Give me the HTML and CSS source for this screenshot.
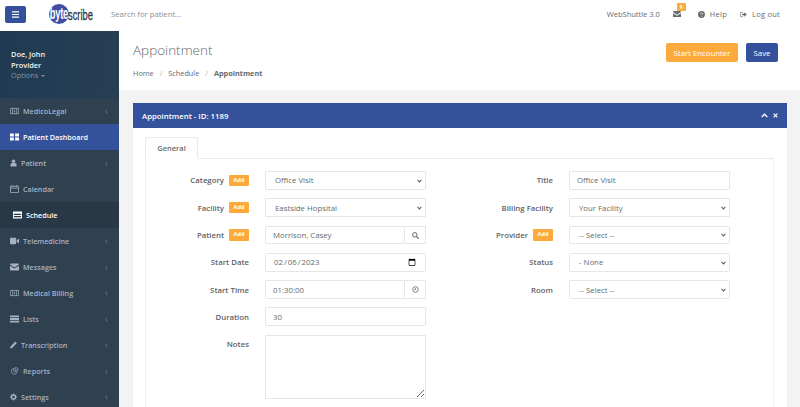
FILE: index.html
```html
<!DOCTYPE html>
<html lang="en">
<head>
<meta charset="utf-8">
<title>Appointment</title>
<link rel="stylesheet" href="styles.css">
</head>
<body>
<header class="topbar">
  <button class="menu-btn" type="button"><svg viewBox="0 0 10 8" class="i9"><path d="M1 1h8M1 4h8M1 7h8" stroke="#fff" stroke-width="1.4"/></svg></button>
  <div class="logo"><span class="logo-ball"><span class="logo-byte">byte</span></span><span class="logo-scribe">scribe</span></div>
  <div class="search">Search for patient...</div>
  <nav class="topnav">
    <span>WebShuttle 3.0</span>
    <span class="mail"><svg viewBox="0 0 10 8" class="i7m"><path d="M0 1.200C0 .5.500 0 1 0h8c.6 0 1 .5 1 1.200L5 4.500zM0 2.600V7c0 .6.400 1 1 1h8c.6 0 1-.4 1-1V2.600L5 5.800z" fill="#676a6c"/></svg><b class="count">8</b></span>
    <span class="navlink"><svg viewBox="0 0 10 10" class="i7"><circle cx="5" cy="5" r="4.900" fill="#676a6c"/><path d="M3.400 3.900C3.500 2.900 4.200 2.400 5 2.400c1 0 1.700.6 1.700 1.400 0 1.200-1.500 1.200-1.500 2.200" fill="none" stroke="#fff" stroke-width="1"/><circle cx="5.100" cy="7.400" r=".7" fill="#fff"/></svg>Help</span>
    <span class="navlink"><svg viewBox="0 0 10 8" class="i7"><path d="M4 1H1.500C.8 1 .5 1.400.5 2v4c0 .6.300 1 1 1H4" fill="none" stroke="#676a6c" stroke-width="1"/><path d="M3 3h3V.8L9.800 4 6 7.200V5H3z" fill="#676a6c"/></svg>Log out</span>
  </nav>
</header>
<div class="layout">
  <aside class="sidebar">
    <div class="profile">
      <div class="pname">Doe, John</div>
      <div class="pname">Provider</div>
      <div class="poptions">Options <i class="caret"></i></div>
    </div>
    <ul class="menu">
      <li class="item"><svg viewBox="0 0 12 8" class="mi"><path d="M.5.5h11v7H.5zM3.500.5v7M8.500.5v7M6 2.500v3" fill="none" stroke="currentColor"/></svg><span>MedicoLegal</span><svg viewBox="0 0 4 6" class="chev"><path d="M3.300.5.800 3l2.500 2.500" fill="none" stroke="currentColor" stroke-width=".8"/></svg></li>
      <li class="item active"><svg viewBox="0 0 10 8" class="mi"><path d="M0 0h4.300v3.400H0zM5.700 0H10v3.400H5.700zM0 4.600h4.300V8H0zM5.700 4.600H10V8H5.700z" fill="currentColor"/></svg><span>Patient Dashboard</span></li>
      <li class="item"><svg viewBox="0 0 8 8" class="mi small"><circle cx="4" cy="2" r="2" fill="currentColor"/><path d="M.5 8V6.200C.5 4.800 1.500 4 2.600 4h2.800c1.100 0 2.100.8 2.100 2.200V8z" fill="currentColor"/></svg><span>Patient</span><svg viewBox="0 0 4 6" class="chev"><path d="M3.300.5.800 3l2.500 2.500" fill="none" stroke="currentColor" stroke-width=".8"/></svg></li>
      <li class="item"><svg viewBox="0 0 10 9" class="mi"><path d="M.5 1.500h9v7h-9zM.5 3.500h9M2.500 0v2M7.500 0v2" fill="none" stroke="currentColor" stroke-width=".9"/></svg><span>Calendar</span></li>
      <li class="item current"><svg viewBox="0 0 10 8" class="mi"><path d="M0 0h10v8H0zM1 2.500v1.500h8V2.500zM1 5v1.500h8V5z" fill="currentColor" fill-rule="evenodd"/></svg><span>Schedule</span></li>
      <li class="item"><svg viewBox="0 0 11 8" class="mi"><path d="M0 1.500C0 .7.500 0 1.300 0h5C7 0 7.600.7 7.600 1.500v5C7.600 7.300 7 8 6.300 8h-5C.5 8 0 7.300 0 6.500zM8.300 3 11 1v6L8.300 5z" fill="currentColor"/></svg><span>Telemedicine</span><svg viewBox="0 0 4 6" class="chev"><path d="M3.300.5.800 3l2.500 2.500" fill="none" stroke="currentColor" stroke-width=".8"/></svg></li>
      <li class="item"><svg viewBox="0 0 10 8" class="mi"><path d="M0 1.200C0 .5.500 0 1 0h8c.6 0 1 .5 1 1.200L5 4.500zM0 2.600V7c0 .6.400 1 1 1h8c.6 0 1-.4 1-1V2.600L5 5.800z" fill="currentColor"/></svg><span>Messages</span><svg viewBox="0 0 4 6" class="chev"><path d="M3.300.5.800 3l2.500 2.500" fill="none" stroke="currentColor" stroke-width=".8"/></svg></li>
      <li class="item"><svg viewBox="0 0 12 8" class="mi"><path d="M.5.5h11v7H.5zM3.500.5v7M8.500.5v7M6 2.500v3" fill="none" stroke="currentColor"/></svg><span>Medical Billing</span><svg viewBox="0 0 4 6" class="chev"><path d="M3.300.5.800 3l2.500 2.500" fill="none" stroke="currentColor" stroke-width=".8"/></svg></li>
      <li class="item"><svg viewBox="0 0 10 8" class="mi"><path d="M0 0h10v2H0zM0 3h10v2H0zM0 6h10v2H0z" fill="currentColor"/></svg><span>Lists</span><svg viewBox="0 0 4 6" class="chev"><path d="M3.300.5.800 3l2.500 2.500" fill="none" stroke="currentColor" stroke-width=".8"/></svg></li>
      <li class="item"><svg viewBox="0 0 9 9" class="mi small"><path d="M0 9l.6-2.600L6.300.7c.4-.4 1-.4 1.400 0l.6.6c.4.4.4 1 0 1.400L2.600 8.400z" fill="currentColor"/></svg><span>Transcription</span><svg viewBox="0 0 4 6" class="chev"><path d="M3.300.5.800 3l2.500 2.500" fill="none" stroke="currentColor" stroke-width=".8"/></svg></li>
      <li class="item"><svg viewBox="0 0 11 11" class="mi"><path d="M4.500 2A4 4 0 1 0 9 6.500H4.500zM6.500.5v4h4a4 4 0 0 0-4-4z" fill="none" stroke="currentColor" stroke-width=".9"/></svg><span>Reports</span><svg viewBox="0 0 4 6" class="chev"><path d="M3.300.5.800 3l2.500 2.500" fill="none" stroke="currentColor" stroke-width=".8"/></svg></li>
      <li class="item"><svg viewBox="0 0 10 10" class="mi small"><circle cx="5" cy="5" r="2.900" fill="none" stroke="currentColor" stroke-width="2"/><path d="M5 0v2M5 8v2M0 5h2M8 5h2M1.500 1.500l1.400 1.400M7.100 7.100l1.400 1.400M8.500 1.500 7.100 2.900M2.900 7.100 1.500 8.500" stroke="currentColor" stroke-width="1.400"/></svg><span>Settings</span><svg viewBox="0 0 4 6" class="chev"><path d="M3.300.5.800 3l2.500 2.500" fill="none" stroke="currentColor" stroke-width=".8"/></svg></li>
    </ul>
  </aside>
  <main class="content">
    <section class="pagehead">
      <div>
        <h1>Appointment</h1>
        <ol class="crumbs"><li>Home</li><li class="sep">/</li><li>Schedule</li><li class="sep">/</li><li class="here">Appointment</li></ol>
      </div>
      <div class="actions">
        <button class="btn orange" type="button">Start Encounter</button>
        <button class="btn blue" type="button">Save</button>
      </div>
    </section>
    <section class="wrap">
      <div class="panel">
        <div class="panel-title">
          <span>Appointment - ID: 1189</span>
          <span class="tools">
            <svg viewBox="0 0 8 5" class="tool"><path d="M.8 4.200 4 1l3.200 3.200" fill="none" stroke="#fff" stroke-width="1.500"/></svg>
            <svg viewBox="0 0 6 6" class="tool x"><path d="M.8.8l4.400 4.400M5.200.8.800 5.200" fill="none" stroke="#fff" stroke-width="1.500"/></svg>
          </span>
        </div>
        <div class="panel-body">
          <div class="tabs"><div class="tab">General</div></div>
          <div class="tabpane">
            <div class="col">
              <div class="row"><label>Category</label><b class="add">Add</b><select class="ctl"><option>Office Visit</option></select></div>
              <div class="row"><label>Facility</label><b class="add">Add</b><select class="ctl"><option>Eastside Hopsital</option></select></div>
              <div class="row"><label>Patient</label><b class="add">Add</b><div class="group"><input class="ctl" type="text" value="Morrison, Casey"><span class="addon"><svg viewBox="0 0 10 10" class="i7"><circle cx="4" cy="4" r="3.200" fill="none" stroke="#555" stroke-width="1.300"/><path d="M6.500 6.500 9.500 9.500" stroke="#555" stroke-width="1.500"/></svg></span></div></div>
              <div class="row"><label>Start Date</label><input class="ctl" type="date" value="2023-02-06"></div>
              <div class="row"><label>Start Time</label><div class="group"><input class="ctl" type="text" value="01:30:00"><span class="addon"><svg viewBox="0 0 10 10" class="i7"><circle cx="5" cy="5" r="4" fill="none" stroke="#555" stroke-width="1"/><path d="M5 2.800V5.200H3.300" fill="none" stroke="#555" stroke-width=".9"/></svg></span></div></div>
              <div class="row"><label>Duration</label><input class="ctl" type="text" value="30"></div>
              <div class="row tall"><label>Notes</label><textarea class="ctl notes"></textarea></div>
            </div>
            <div class="col">
              <div class="row"><label>Title</label><input class="ctl" type="text" value="Office Visit"></div>
              <div class="row"><label>Billing Facility</label><select class="ctl"><option>Your Facility</option></select></div>
              <div class="row"><label>Provider</label><b class="add">Add</b><select class="ctl"><option>-- Select --</option></select></div>
              <div class="row"><label>Status</label><select class="ctl"><option>- None</option></select></div>
              <div class="row"><label>Room</label><select class="ctl"><option>-- Select --</option></select></div>
            </div>
          </div>
        </div>
      </div>
    </section>
  </main>
</div>
</body>
</html>
```
FILE: styles.css
```css
* { box-sizing: border-box; }
html, body { margin: 0; height: 100%; }
body {
  height: 100vh;
  overflow: hidden;
  display: flex;
  flex-direction: column;
  font-family: "Open Sans", sans-serif;
  font-size: 7.500px;
  color: #676a6c;
  background: #fff;
}
svg { display: block; flex: none; }
.i9 { width: 9px; height: 7px; }
.i7 { width: 7px; height: 7px; }
.i7m { width: 8px; height: 6.500px; }

.topbar { height: 31px; flex: none; display: flex; align-items: center; padding-left: 5px; padding-right: 20px; background: #fff; }
.menu-btn { width: 21px; height: 17px; margin-top: -3px; padding: 0; border: 0; border-radius: 2px; background: #34519b; display: flex; align-items: center; justify-content: center; }
.logo { width: 62px; margin-left: 23px; margin-top: -3px; display: flex; align-items: center; }
.logo-ball { width: 20px; height: 20px; flex: none; border-radius: 50%; background: #3d4fa5; display: flex; align-items: center; justify-content: center; }
.logo-byte { font-family: "Liberation Sans", sans-serif; font-weight: 700; font-size: 16px; line-height: 16px; color: #fff; transform: scaleX(.58); letter-spacing: -.3px; }
.logo-scribe { font-family: "Liberation Sans", sans-serif; font-weight: 400; font-size: 15px; color: #2e3440; -webkit-text-stroke: .3px #2e3440; display: inline-block; transform-origin: left center; transform: scaleX(.62); width: 28px; margin-left: -1px; }
.search { margin-top: -3px; color: #8a8d8f; font-size: 7.700px; }
.topnav { margin-left: auto; margin-top: -3px; display: flex; align-items: center; gap: 13px; }
.mail { position: relative; margin-right: 4px; }
.count { position: absolute; left: 4px; top: -8px; width: 9px; height: 8.500px; border-radius: 1px; background: #f8ac3f; color: #fff; font-size: 5px; font-weight: 600; line-height: 8.500px; text-align: center; }
.navlink { display: flex; align-items: center; gap: 5px; letter-spacing: .25px; }

.layout { flex: 1; min-height: 0; display: flex; }
.sidebar { width: 119px; flex: none; background: #2f4050; overflow: hidden; }
.profile { height: 67px; padding: 18px 11px 0; background: linear-gradient(100deg, #1f3a52, #273f55); line-height: 10.500px; font-size: 7.400px; }
.pname { color: #f0f2f5; font-weight: 600; }
.poptions { color: #8595a6; }
.caret { display: inline-block; margin-left: 1px; vertical-align: middle; border: 2px solid transparent; border-top-color: #8595a6; border-bottom-width: 0; }
.menu { list-style: none; margin: 0; padding: 0; }
.item { height: 26px; display: flex; align-items: center; padding: 0 11px 0 10px; gap: 4px; color: #a7b1c2; font-weight: 600; font-size: 7.200px; }
.item.active { background: #34519b; color: #fff; }
.item.current { background: #293846; color: #fff; padding-left: 13px; }
.mi { width: 9px; height: 8px; color: #a7b1c2; }
.item.active .mi, .item.current .mi { color: #fff; }
.mi.small { width: 7px; }
.chev { width: 3px; height: 5px; margin-left: auto; color: #8595a6; }

.content { flex: 1; min-width: 0; display: flex; flex-direction: column; background: #f3f3f4; }
.pagehead { height: 59px; flex: none; display: flex; justify-content: space-between; align-items: flex-start; padding: 10px 22px 0 14px; background: #fff; }
h1 { margin: 0; font-size: 13.500px; font-weight: 300; line-height: 18px; color: #676a6c; }
.crumbs { list-style: none; margin: 9px 0 0; padding: 0; display: flex; gap: 6px; font-size: 7.300px; line-height: 10px; }
.sep { color: #b0b2b4; }
.here { font-weight: 700; }
.actions { display: flex; gap: 8px; margin-top: 2px; }
.btn { height: 19px; padding: 0; border: 0; border-radius: 2px; color: #fff; font-family: inherit; font-size: 7.800px; white-space: nowrap; }
.orange { width: 72px; background: #fdaa3c; }
.blue { width: 32px; background: #34519b; }

.wrap { flex: 1; min-height: 0; padding: 13px 13px 0 14px; }
.panel { height: 100%; background: #fff; }
.panel-title { height: 25px; display: flex; align-items: center; justify-content: space-between; padding: 0 9px 0 9px; background: #34519b; color: #fff; font-weight: 600; font-size: 7.800px; }
.tools { display: flex; align-items: center; gap: 5px; }
.tool { width: 7px; height: 5px; }
.tool.x { width: 5px; height: 5px; }
.panel-body { padding: 9px 13px 0 12px; }
.tabs { height: 22px; border-bottom: 1px solid #e7eaec; }
.tab { width: 53px; height: 22px; background: #fff; border: 1px solid #e7eaec; border-bottom-color: #fff; border-radius: 2px 2px 0 0; text-align: center; line-height: 21px; font-size: 7.500px; font-weight: 600; }
.tabpane { display: flex; padding: 12px 0 0; border-left: 1px solid #f0f1f2; border-right: 1px solid #f0f1f2; height: 260px; }
.col { width: 304px; display: flex; flex-direction: column; gap: 8.400px; }
.row { height: 18.900px; display: flex; align-items: center; justify-content: flex-end; gap: 5px; width: 280px; flex: none; }
.row.tall { height: auto; align-items: flex-start; }
.row.tall label { padding-top: 4px; }
label { font-weight: 600; font-size: 7.800px; color: #5f6264; }
.add { width: 20px; height: 11.500px; border-radius: 1px; background: #fdaa3c; color: #fff; font-size: 5.500px; font-weight: 700; line-height: 11.500px; text-align: center; }
.ctl { width: 161px; height: 18.900px; flex: none; margin-left: 11px; padding: 0 7px; border: 1px solid #e5e6e7; border-radius: 1px; background: #fff; color: #676a6c; font-family: "Open Sans", sans-serif; font-size: 7.800px; outline: 0; }
.group { width: 161px; flex: none; margin-left: 11px; display: flex; }
.group .ctl { flex: 1; width: auto; min-width: 0; margin: 0; }
select.ctl {
  appearance: none;
  padding: 0 14px 0 9px;
  background: #fff url("data:image/svg+xml,%3Csvg xmlns='http://www.w3.org/2000/svg' viewBox='0 0 6 4'%3E%3Cpath d='M.7.7 3 3l2.300-2.300' fill='none' stroke='%23555' stroke-width='1.100'/%3E%3C/svg%3E") no-repeat right 3.500px center / 5px 3.500px;
}
.addon { width: 21px; height: 18.900px; flex: none; display: flex; align-items: center; justify-content: center; border: 1px solid #e5e6e7; border-left: 0; background: #fff; }
.notes { height: 64px; padding: 3px 7px; }
```
